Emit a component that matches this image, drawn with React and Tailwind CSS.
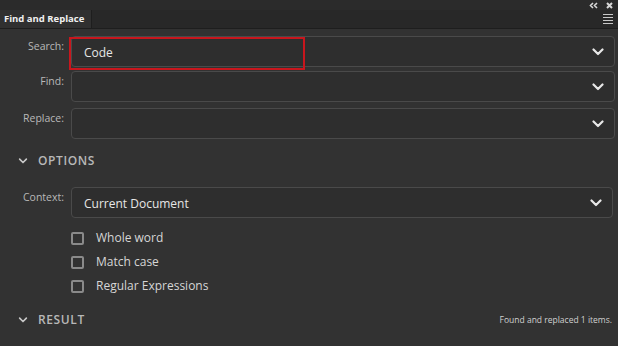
import React from 'react';

const font = { fontFamily: '"Open Sans", "Noto Sans", sans-serif' };

const Chevron = ({ className = '' }) => (
  <svg width="12" height="8" viewBox="0 0 12 8" className={className}>
    <path d="M1.5 1.5 L6 6 L10.5 1.5" fill="none" stroke="currentColor" strokeWidth="2.2" strokeLinecap="round" strokeLinejoin="round" />
  </svg>
);

const Dropdown = ({ value, highlight = false }) => (
  <div className="relative flex-1 h-[31px] rounded-[4px] border border-[#4a4a4a] bg-[#2e2e2e] flex items-center pl-[12px] pr-[10px]">
    <span className="flex-1 pt-[3px] text-[12px] text-[#e6e6e6]">{value}</span>
    <Chevron className="text-[#e8e8e8]" />
    {highlight && (
      <div className="absolute left-[-3px] top-[0px] w-[236px] h-[33px] border-2 border-[#c8161d]" />
    )}
  </div>
);

const FieldRow = ({ label, value, highlight, className = '' }) => (
  <div className={`flex items-start ${className}`}>
    <div className="w-[65px] shrink-0 text-right pr-[1px] pt-[3px] text-[10.5px] text-[#b8b8b8]">{label}</div>
    <div className="flex-1 flex ml-[6px] mr-[3px]">
      <Dropdown value={value} highlight={highlight} />
    </div>
  </div>
);

const Checkbox = ({ label }) => (
  <div className="flex items-center h-[24px]">
    <div className="w-[13px] h-[13px] rounded-[2px] border-2 border-[#8a8a8a]" />
    <span className="ml-[12px] text-[12px] text-[#d6d6d6]">{label}</span>
  </div>
);

const Section = ({ title, right }) => (
  <div className="flex items-center h-[20px] pl-[17px] pr-[6px]">
    <Chevron className="text-[#c8c8c8] scale-75" />
    <span className="ml-[9px] text-[12px] font-semibold tracking-[0.6px] text-[#b8b8b8]">{title}</span>
    <span className="flex-1" />
    {right && <span className="text-[8.5px] text-[#d0d0d0]">{right}</span>}
  </div>
);

export default function App() {
  return (
    <div className="w-[618px] h-[346px] bg-[#323232] flex flex-col overflow-hidden" style={font}>
      {/* top strip */}
      <div className="h-[10px] bg-[#2b2b2b] flex items-center justify-end pr-[5px] gap-[8px]">
        <svg width="9" height="7" viewBox="0 0 9 7">
          <path d="M4 1 L1.5 3.5 L4 6 M8 1 L5.5 3.5 L8 6" fill="none" stroke="#d8d8d8" strokeWidth="1.6" />
        </svg>
        <svg width="7" height="7" viewBox="0 0 7 7">
          <path d="M1 1 L6 6 M6 1 L1 6" stroke="#d8d8d8" strokeWidth="2" />
        </svg>
      </div>
      {/* tab bar */}
      <div className="h-[19px] bg-[#282828] flex border-b border-[#1e1e1e]">
        <div className="w-[92px] bg-[#303030] border-r border-[#1e1e1e] flex items-center pl-[4px]">
          <span className="text-[9.5px] font-bold text-[#f0f0f0]">Find and Replace</span>
        </div>
        <div className="flex-1" />
        <div className="flex flex-col justify-center gap-[2px] pr-[5px]">
          <div className="w-[10px] h-[1px] bg-[#c8c8c8]" />
          <div className="w-[10px] h-[1px] bg-[#c8c8c8]" />
          <div className="w-[10px] h-[1px] bg-[#c8c8c8]" />
          <div className="w-[10px] h-[1px] bg-[#c8c8c8]" />
        </div>
      </div>

      <FieldRow label="Search:" value="Code" highlight className="mt-[7px]" />
      <FieldRow label="Find:" value="" className="mt-[4px]" />
      <FieldRow label="Replace:" value="" className="mt-[6px]" />

      <div className="mt-[12px]">
        <Section title="OPTIONS" />
      </div>

      <div className="mt-[16px] flex items-start">
        <div className="w-[65px] shrink-0 text-right pr-[1px] pt-[3px] text-[10.5px] text-[#b8b8b8]">Context:</div>
        <div className="flex-1 flex ml-[6px] mr-[5px]">
          <Dropdown value="Current Document" />
        </div>
      </div>

      <div className="mt-[8px] pl-[71px] flex flex-col">
        <Checkbox label="Whole word" />
        <Checkbox label="Match case" />
        <Checkbox label="Regular Expressions" />
      </div>

      <div className="mt-[12px]">
        <Section title="RESULT" right="Found and replaced 1 items." />
      </div>
    </div>
  );
}
